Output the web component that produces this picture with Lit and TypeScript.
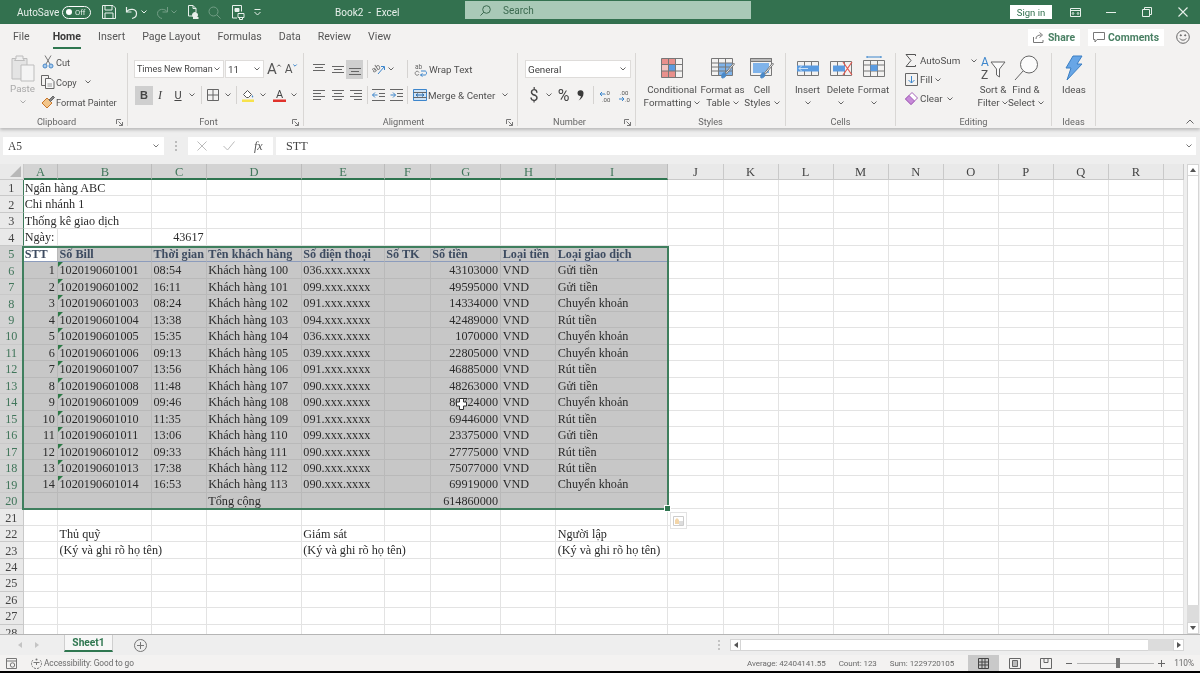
import { LitElement, html, svg, css } from "lit";
import { customElement } from "lit/decorators.js";

// spacing helpers shared by all the bars
const shared = css`
  .m1 { margin-left: 1px; } .m2 { margin-left: 2px; } .m3 { margin-left: 3px; }
  .m4 { margin-left: 4px; } .m5 { margin-left: 5px; } .m6 { margin-left: 6px; }
  .m7 { margin-left: 7px; } .m8 { margin-left: 8px; } .m9 { margin-left: 9px; }
  .m10 { margin-left: 10px; } .m11 { margin-left: 11px; } .m13 { margin-left: 13px; }
  .m14 { margin-left: 14px; } .m18 { margin-left: 18px; } .m19 { margin-left: 19px; }
  .m25 { margin-left: 25px; } .m26 { margin-left: 26px; }
  svg { display: block; flex: none; overflow: visible; }
`;

const chev = (cls = "", color = "#666") => html`<svg class=${cls} width="6" height="4" viewBox="0 0 6 4" fill="none" stroke=${color}><path d="M.5.5 3 3 5.500.5"/></svg>`;

/* title bar */
@customElement("xl-titlebar")
class XlTitlebar extends LitElement {
  static styles = [shared, css`
    :host { display: flex; align-items: center; height: 24px; background: #33714f; color: #e8f0eb; font-size: 10px; flex: none; }
    .auto { margin-left: 17px; width: 45px; white-space: nowrap; }
    .toggle { width: 29px; height: 13px; box-sizing: border-box; border: 1px solid #fff; border-radius: 7px; display: flex; align-items: center; padding-left: 3px; font-size: 7.500px; gap: 3px; }
    .toggle i { width: 6px; height: 6px; border-radius: 50%; background: #fff; }
    .dim { opacity: .35; }
    .title { margin-left: 74px; width: 130px; white-space: nowrap; }
    .search { width: 286px; height: 18px; margin-top: -4px; background: #a9c9b7; display: flex; align-items: center; color: #3c6a50; font-size: 10px; box-sizing: border-box; padding-left: 15px; gap: 12px; }
    .sign { margin-left: 259px; width: 42px; height: 14px; background: #fff; color: #33714f; font-size: 9.500px; display: flex; align-items: center; justify-content: center; }
  `];
  render() {
    return html`
      <span class="auto">AutoSave</span>
      <span class="toggle"><i></i>Off</span>
      <svg class="m11" width="14" height="14" viewBox="0 0 14 14" fill="none" stroke="currentColor"><path d="M.5.5H11l2.500 2.500v10.500H.5z"/><path d="M3 .5V5h7V.5M3 13.500V8h8v5.500"/></svg>
      <svg class="m9" width="13" height="13" viewBox="0 0 13 13" fill="none" stroke="currentColor" stroke-width="1.200"><path d="M1.500 1v5h5"/><path d="M1.500 6C4 2 11.500 2.500 11.500 7.500c0 2.500-2 4.500-4.500 5"/></svg>
      <svg class="m3" width="6" height="4" viewBox="0 0 6 4" fill="none" stroke="currentColor"><path d="M.5.5 3 3 5.500.5"/></svg>
      <svg class="m9 dim" width="13" height="13" viewBox="0 0 13 13" fill="none" stroke="currentColor"><path d="M11.500 1v5h-5"/><path d="M11.500 6C9 2 1.500 2.500 1.500 7.500c0 2.500 2 4.500 4.500 5"/></svg>
      <svg class="m2 dim" width="6" height="4" viewBox="0 0 6 4" fill="none" stroke="currentColor"><path d="M.5.5 3 3 5.500.5"/></svg>
      <svg class="m9" width="14" height="15" viewBox="0 0 14 15" fill="none" stroke="currentColor"><path d="M9 11H2.500V.5H7L10 3.500V7M7 .5v3h3"/><circle cx="9" cy="10" r="2.500" fill="currentColor"/><path d="M7 13h5.500" stroke-width="2"/></svg>
      <svg class="m8 dim" width="13" height="13" viewBox="0 0 13 13" fill="none" stroke="currentColor"><circle cx="5.500" cy="5.500" r="4.500"/><path d="m9 9 3.500 3.500"/></svg>
      <svg class="m10" width="14" height="15" viewBox="0 0 14 15" fill="none" stroke="currentColor"><path d="M1.500.5h9v6M1.500.5V13H6"/><path d="M4 3.500h4v3H4z" fill="currentColor"/><path d="M7 8.500h6v4H7z"/><path d="M8.500 13v1.500h3V13"/></svg>
      <svg class="m9" width="7" height="7" viewBox="0 0 7 7" fill="none" stroke="currentColor"><path d="M.5.5h6M.5 3l3 3 3-3"/></svg>
      <span class="title">Book2&nbsp; -&nbsp; Excel</span>
      <div class="search">
        <svg width="11" height="11" viewBox="0 0 11 11" fill="none" stroke="#3c6a50"><circle cx="6.500" cy="4.500" r="3.800"/><path d="M3.800 7.200.5 10.500"/></svg>
        <span>Search</span>
      </div>
      <span class="sign">Sign in</span>
      <svg class="m18" width="11" height="9" viewBox="0 0 11 9" fill="none" stroke="currentColor"><path d="M.5.5h10v8H.5z"/><path d="M.5 2.500h10" /><path d="M3 7V4.500M8 7V4.500M2 5.500 3 4.500l1 1M7 5.500l1-1 1 1"/></svg>
      <svg class="m25" width="10" height="1" viewBox="0 0 10 1"><path d="M0 .5h10" stroke="currentColor"/></svg>
      <svg class="m26" width="10" height="10" viewBox="0 0 10 10" fill="none" stroke="currentColor"><path d="M.5 2.500h7v7h-7zM2.500 2.500v-2h7v7h-2"/></svg>
      <svg class="m26" width="10" height="10" viewBox="0 0 10 10" fill="none" stroke="currentColor" stroke-width="1.100"><path d="m.5.500 9 9M9.500.500l-9 9"/></svg>
    `;
  }
}

/* ribbon icons */
const launcher = html`<svg class="launch" width="7" height="7" viewBox="0 0 7 7" fill="none" stroke="#777"><path d="M.5 5V.5H5M2.500 2.500l4 4M6.500 3v3.500H3"/></svg>`;

const caretUp = html`<svg class="cr" width="4" height="3" viewBox="0 0 4 3" fill="none" stroke="#555"><path d="M.3 2.500 2 .8l1.700 1.700"/></svg>`;
const caretDown = html`<svg class="cr" width="4" height="3" viewBox="0 0 4 3" fill="none" stroke="#3d86cc"><path d="M.3.500 2 2.200 3.700.5"/></svg>`;

const brush = svg`<path d="M11 20c-1-3 1-6 3-5l1 1c0 3-2 4-4 4z" fill="#4a89c8" stroke="#4a89c8"/><path d="m14.500 15 8-10 1 1-8 10z" fill="#fbfbfb" stroke="#777"/>`;

const icons = {
  paste: html`<svg width="24" height="27" viewBox="0 0 24 27" fill="none" stroke="#bdbdbd"><path d="M1 3.500h15V24H1z" fill="#e4e4e4"/><path d="M5 3.500V1h7v2.500l1.500 2h-10z" fill="#efefef"/><path d="M10 10h13v16H10z" fill="#f4f4f4"/></svg>`,
  cut: html`<svg width="14" height="14" viewBox="0 0 14 14" fill="none"><path d="m5 9 5-8.500M9 9 4 .5" stroke="#777"/><circle cx="4" cy="11" r="2" stroke="#4a89c8" fill="#a9cbec"/><circle cx="10" cy="11" r="2" stroke="#4a89c8" fill="#a9cbec"/></svg>`,
  copy: html`<svg width="14" height="14" viewBox="0 0 14 14" fill="none" stroke="#666"><path d="M.5.5h7v10h-7z"/><path d="M4.500 3.500H10l3 3v7H4.500z" fill="#f7f7f7"/><path d="M6.500 9h4.500M6.500 11h4.500" stroke="#999"/></svg>`,
  painter: html`<svg width="14" height="14" viewBox="0 0 14 14" fill="none"><path d="M1 8 6 3l5 5-5 5z" fill="#f2c58a" stroke="#c9762a"/><path d="m8 5 4-4 1.500 1.500-4 4z" fill="#888" stroke="#666"/></svg>`,
  borders: html`<svg width="12" height="12" viewBox="0 0 12 12" fill="none" stroke="#666"><path d="M.5.500h11v11H.5zM6 .5v11M.5 6h11"/></svg>`,
  fill: html`<svg width="14" height="14" viewBox="0 0 14 14" fill="none"><path d="m2.500 6.500 4-4 4 4-3 3h-2z" fill="#fff" stroke="#555"/><path d="M11.500 7c1 1.500 1 2.500 0 2.500s-1-1 0-2.500z" fill="#4a89c8"/><path d="M1 11.500h12V14H1z" fill="#f7e24c"/></svg>`,
  fontColor: html`<svg width="13" height="14" viewBox="0 0 13 14"><text x="6.500" y="9.500" font-size="11" font-family="Roboto" text-anchor="middle" fill="#444">A</text><path d="M0 11.500h13V14H0z" fill="#e0322b"/></svg>`,
  alignTop: html`<svg width="12" height="12" viewBox="0 0 12 12" stroke="#666"><path d="M0 1.500h12M2 4.500h8M0 7.500h12"/></svg>`,
  alignMid: html`<svg width="12" height="12" viewBox="0 0 12 12" stroke="#666"><path d="M0 3.500h12M2 6.500h8M0 9.500h12"/></svg>`,
  alignBot: html`<svg width="12" height="12" viewBox="0 0 12 12" stroke="#666"><path d="M0 5.500h12M2 8.500h8M0 11.500h12"/></svg>`,
  left: html`<svg width="12" height="12" viewBox="0 0 12 12" stroke="#666"><path d="M0 1.500h12M0 4.500h8M0 7.500h12M0 10.500h8"/></svg>`,
  center: html`<svg width="12" height="12" viewBox="0 0 12 12" stroke="#666"><path d="M0 1.500h12M2 4.500h8M0 7.500h12M2 10.500h8"/></svg>`,
  right: html`<svg width="12" height="12" viewBox="0 0 12 12" stroke="#666"><path d="M0 1.500h12M4 4.500h8M0 7.500h12M4 10.500h8"/></svg>`,
  orient: html`<svg width="13" height="13" viewBox="0 0 13 13" fill="none"><text x="0" y="8" font-size="8" font-family="Roboto" fill="#666" transform="rotate(-35 4 6)">ab</text><path d="M6 11 12 4M9 3.500h3.500V7" stroke="#3d86cc"/></svg>`,
  indentL: html`<svg width="13" height="12" viewBox="0 0 13 12" fill="none"><path d="M0 .5h13M0 11.500h13M7 4.500h6M7 7.500h6" stroke="#666"/><path d="M5.500 6H.5M3 3.500.5 6 3 8.500" stroke="#3d86cc"/></svg>`,
  indentR: html`<svg width="13" height="12" viewBox="0 0 13 12" fill="none"><path d="M0 .5h13M0 11.500h13M7 4.500h6M7 7.500h6" stroke="#666"/><path d="M.5 6h5M3 3.500 5.500 6 3 8.500" stroke="#3d86cc"/></svg>`,
  wrap: html`<svg width="12" height="13" viewBox="0 0 12 13" fill="none"><text x="0" y="5.500" font-size="6.500" font-family="Roboto" fill="#666">ab</text><path d="M4 9.500a2 2 0 1 0 0 1.500" stroke="#666" stroke-width=".8"/><path d="M6 8h4c2 0 2 4 0 4H5.500M7.500 10.500 5.500 12l2 1.500" stroke="#3d86cc"/></svg>`,
  merge: html`<svg width="14" height="12" viewBox="0 0 14 12" fill="none"><path d="M.5.500h13v11H.5z" fill="#cfe3f6" stroke="#3d86cc"/><path d="M.5 3.500h13M.5 8.500h13" stroke="#666"/><path d="M3 6h8M5 4.500 3 6l2 1.500M9 4.500 11 6 9 7.500" stroke="#2f6fad"/></svg>`,
  comma: html`<svg width="9" height="11" viewBox="0 0 9 11"><path d="M1.500 3a3 3 0 1 1 6 .5C7.500 6.500 5.500 9 2.500 10.500 4 9 4.800 7.500 4.800 6 3 6.300 1.500 5 1.500 3z" fill="#3a3a3a"/></svg>`,
  decUp: html`<svg width="13" height="13" viewBox="0 0 13 13" fill="none"><text x="6" y="5.500" font-size="6" font-family="Roboto" fill="#555">.0</text><text x="3" y="12.500" font-size="6" font-family="Roboto" fill="#555">.00</text><path d="M6 5H1M3 3 1 5l2 2" stroke="#3d86cc"/></svg>`,
  decDown: html`<svg width="13" height="13" viewBox="0 0 13 13" fill="none"><text x="2" y="5.500" font-size="6" font-family="Roboto" fill="#555">.00</text><text x="7" y="12.500" font-size="6" font-family="Roboto" fill="#555">.0</text><path d="M1 10h5M4 8l2 2-2 2" stroke="#3d86cc"/></svg>`,
  cond: html`<svg width="22" height="20" viewBox="0 0 22 20" fill="none"><path d="M.5.500h14v6h-14zM7.500 13h7v6.500h-7zM.5 13h7v6.500h-7z" fill="#e8908c"/><path d="M.5 6.500h14V13H.5z" fill="#f3c4c1"/><path d="M7.500 6.500h7V13h-7z" fill="#5a9be0"/><path d="M.5.5h21v19H.5zM.5 6.500h21M.5 13h21M7.500.5v19M14.500.5v19" stroke="#777"/></svg>`,
  table: html`<svg width="24" height="20" viewBox="0 0 24 20" fill="none"><path d="M7.500 5h14v12.500h-14z" fill="#7fb3ea"/><path d="M.5.5h21v17H.5zM.5 5h21M.5 9h21M.5 13h21M7.500.5v17M14.500.5v17" stroke="#777"/>${brush}</svg>`,
  styles: html`<svg width="24" height="20" viewBox="0 0 24 20" fill="none"><path d="M.5.5h21v17H.5z" stroke="#777"/><path d="M.5.5h21v3H.5z" fill="#bbb" stroke="#777"/><path d="M3 5h16v10H3z" fill="#7fb3ea"/>${brush}</svg>`,
  insert: html`<svg width="22" height="20" viewBox="0 0 22 20" fill="none"><path d="M.5 3.500h21v14H.5zM7.500 3.500v14M14.500 3.500v14" stroke="#777"/><path d="M0 7.500h22v6H0z" fill="#5a9be0"/><path d="M11 10.500H2M5 7.500l-3 3 3 3" stroke="#cfe3f6"/></svg>`,
  del: html`<svg width="22" height="20" viewBox="0 0 22 20" fill="none"><path d="M.5 3.500h21v14H.5zM7.500 3.500v14M14.500 3.500v14" stroke="#777"/><path d="M3 7.500h12v6H3z" fill="#5a9be0"/><path d="m13 4 9 13M22 4l-9 13" stroke="#e0584f" stroke-width="1.200"/></svg>`,
  format: html`<svg width="22" height="22" viewBox="0 0 22 22" fill="none"><path d="M4 1h14M4 0v2M18 0v2" stroke="#3d86cc"/><path d="M.5 4.500h21v16H.5zM7.500 4.500v16M14.500 4.500v16M.5 9h21M.5 15h21" stroke="#777"/><path d="M7.500 9h7v6h-7z" fill="#5a9be0"/></svg>`,
  sum: html`<svg width="11" height="13" viewBox="0 0 11 13" fill="none" stroke="#555"><path d="M10.500 2V.5H1L6 6.500 1 12.500h9.500V11"/></svg>`,
  fillDown: html`<svg width="13" height="13" viewBox="0 0 13 13" fill="none"><path d="M.5.500h12v12H.5z" stroke="#666"/><path d="M6.500 3v7M3.500 7l3 3 3-3" stroke="#3d86cc"/></svg>`,
  clear: html`<svg width="13" height="13" viewBox="0 0 13 13" fill="none"><path d="M.5 7 7 .5 12.500 6 6 12.500z" fill="#fff" stroke="#a45fb8"/><path d="M.5 7 4 3.500 9.500 9 6 12.500z" fill="#c78ad8" stroke="#a45fb8"/></svg>`,
  sort: html`<svg width="26" height="26" viewBox="0 0 26 26" fill="none"><text x="1" y="11" font-size="12" font-family="Roboto" fill="#3d86cc">A</text><text x="1" y="24" font-size="12" font-family="Roboto" fill="#555">Z</text><path d="M11 7h14l-5.500 7v8l-3-2v-6z" stroke="#666" fill="#fbfbfb"/></svg>`,
  find: html`<svg width="26" height="26" viewBox="0 0 26 26" fill="none" stroke="#666"><circle cx="16" cy="9.500" r="8.500" fill="#fbfbfb"/><path d="M10 16 2 25"/></svg>`,
  ideas: html`<svg width="20" height="26" viewBox="0 0 20 26"><path d="M9 1h9L13 9h5L3 25 7 13H2z" fill="#68a6e6" stroke="#3b7fc4"/></svg>`,
  share: html`<svg width="12" height="11" viewBox="0 0 12 11" fill="none" stroke="#777"><path d="M.5 5v5.500H10V8M3 7c0-3 2-4 5-4M6.500 .5l3 2.500-3 2.500"/></svg>`,
  comment: html`<svg width="12" height="11" viewBox="0 0 12 11" fill="none" stroke="#777"><path d="M.5.500h11v7H4L2 10V7.500H.5z"/></svg>`,
  smile: html`<svg width="14" height="14" viewBox="0 0 14 14" fill="none" stroke="#666"><circle cx="7" cy="7" r="6.300"/><circle cx="4.800" cy="5.300" r=".6" fill="#666"/><circle cx="9.200" cy="5.300" r=".6" fill="#666"/><path d="M3.800 8.500c1.500 2.200 5 2.200 6.400 0"/></svg>`,
};

const big = (icon: any, l1: string, l2: any, cls = "") => html`
  <div class="big ${cls}">
    <div class="bi">${icon}</div>
    <div class="bl">${l1}</div>
    <div class="bl">${l2}</div>
  </div>`;
const drop = (t: string) => html`${t}<svg class="inl" width="6" height="4" viewBox="0 0 6 4" fill="none" stroke="#666"><path d="M.5.5 3 3 5.500.5"/></svg>`;
const dropOnly = html`<svg class="inl" width="6" height="4" viewBox="0 0 6 4" fill="none" stroke="#666"><path d="M.5.5 3 3 5.500.5"/></svg>`;

@customElement("xl-ribbon")
class XlRibbon extends LitElement {
  static styles = [shared, css`
    :host { display: block; flex: none; font-size: 9.800px; color: #505050; position: relative; z-index: 2; box-shadow: 0 2px 3px rgba(0,0,0,.22); background: #f3f2f1; }
    .tabs { height: 26px; display: flex; align-items: center; gap: 17px; padding-left: 13px; font-size: 10.600px; color: #555; }
    .tabs span { position: relative; white-space: nowrap; line-height: 26px; }
    .tabs .file { margin-right: 6px; }
    .tabs .on { color: #3a3a3a; font-weight: 700; }
    .tabs .on::after { content: ""; position: absolute; left: 0; right: 0; bottom: 1px; height: 2.500px; background: #2f7750; }
    .act { margin-left: auto; display: flex; align-items: center; gap: 8px; padding-right: 10px; }
    .act button { all: unset; height: 17px; background: #fff; color: #4a8064; font: 700 10.400px Roboto, sans-serif; display: flex; align-items: center; justify-content: center; gap: 3px; }
    .act .sh { width: 52px; }
    .act .co { width: 76px; margin-right: 4px; }
    .rib { display: flex; height: 78px; box-sizing: border-box; padding: 3px 0 2px; position: relative; }
    .g { display: flex; flex-direction: column; box-sizing: border-box; border-right: 1px solid #d9d7d5; flex: none; }
    .w128 { width: 128px; } .w176 { width: 176px; } .w214 { width: 214px; } .w118 { width: 118px; }
    .w150 { width: 150px; } .w110 { width: 110px; } .w156 { width: 156px; } .w44 { width: 44px; }
    .body { flex: 1; display: flex; min-height: 0; }
    .gl { height: 12px; margin-bottom: -2px; display: flex; align-items: center; font-size: 9.200px; color: #666; line-height: 12px; }
    .gl span { flex: 1; text-align: center; }
    .launch { margin: 0 4px 0 3px; }
    .col { display: flex; flex-direction: column; }
    .paste { width: 31px; margin-left: 7px; align-items: center; padding-top: 2px; color: #a9a9a9; }
    .paste .t { line-height: 14px; }
    .paste svg:last-child { margin-top: 4px; }
    .clip { margin-left: 3px; margin-top: -1px; font-size: 9.200px; }
    .rl { height: 20px; display: flex; align-items: center; white-space: nowrap; }
    .rl svg:first-child { margin-right: 1px; }
    .r1 { height: 18px; margin-top: 7px; display: flex; align-items: center; white-space: nowrap; }
    .r2 { height: 20px; margin-top: 7px; display: flex; align-items: center; white-space: nowrap; }
    .box { height: 18px; background: #fff; border: 1px solid #dedcda; box-sizing: border-box; display: flex; align-items: center; justify-content: space-between; padding: 0 3px 0 2px; font-size: 9.800px; color: #444; }
    .fb { width: 90px; font-size: 9px; } .sb { width: 39px; margin-left: 1px; } .nb { width: 106px; padding: 0 4px 0 2px; }
    .sz1 { font-size: 15px; margin-left: 3px; color: #555; }
    .sz2 { font-size: 12px; margin-left: 4px; color: #555; }
    .cr { align-self: flex-start; margin-top: 4px; }
    .ch { width: 18px; height: 19px; display: flex; align-items: center; justify-content: center; font: 700 11px "Liberation Sans", sans-serif; color: #444; }
    .bold { background: #cfcfcf; margin-left: 1px; }
    .it { width: 14px; font: italic 12px "Liberation Serif", serif; }
    .un { width: 22px; font: 11px Roboto, sans-serif; text-decoration: underline; }
    .sep { width: 1px; height: 18px; background: #d5d3d1; flex: none; }
    .on-box { width: 17px; height: 19px; background: #cfcfcf; display: flex; align-items: center; justify-content: center; }
    .fs { padding-left: 6px; }
    .al { padding-left: 9px; }
    .nu { padding-left: 7px; }
    .dollar { width: 10px; margin-left: 4px; font-size: 16px; color: #444; text-align: center; }
    .pct { width: 15px; font-size: 16px; color: #444; text-align: center; }
    .big { display: flex; flex-direction: column; align-items: center; padding-top: 5px; flex: none; white-space: nowrap; }
    .bi { height: 20px; margin-bottom: 4.500px; display: flex; align-items: flex-end; }
    .bl { line-height: 13px; height: 13px; display: flex; align-items: center; gap: 3px; }
    .inl { margin-top: 1px; }
    .c1 { width: 56px; margin-left: 8px; } .c2 { width: 45px; } .c3 { width: 34px; }
    .d { width: 33px; }
    .e1 { width: 32px; } .e2 { width: 34px; }
    .tall { padding-top: 2px; }
    .tall .bi { height: 26px; margin-bottom: 1.500px; }
    .ml5 { margin-left: 5px; }
    .ed { width: 72px; margin-left: 9px; margin-top: -2px; }
    .ed .row { height: 19px; display: flex; align-items: center; white-space: nowrap; }
    .ed .ico { width: 15px; flex: none; }
    .ideas { width: 44px; }
    .collapse { position: absolute; right: 6px; bottom: 4px; }
  `];
  render() {
    return html`
      <div class="tabs">
        <span class="file">File</span><span class="on">Home</span><span>Insert</span><span>Page Layout</span><span>Formulas</span><span>Data</span><span>Review</span><span>View</span>
        <div class="act">
          <button class="sh">${icons.share}Share</button>
          <button class="co">${icons.comment}Comments</button>
          ${icons.smile}
        </div>
      </div>
      <div class="rib">
        <section class="g w128">
          <div class="body">
            <div class="col paste">${icons.paste}<span class="t">Paste</span>${chev("", "#aaa")}</div>
            <div class="col clip">
              <div class="rl">${icons.cut}Cut</div>
              <div class="rl">${icons.copy}Copy${chev("m8")}</div>
              <div class="rl">${icons.painter}Format Painter</div>
            </div>
          </div>
          <div class="gl"><span>Clipboard</span>${launcher}</div>
        </section>

        <section class="g w176">
          <div class="body col fs">
            <div class="r1">
              <div class="box fb">Times New Roman${chev()}</div>
              <div class="box sb">11${chev()}</div>
              <div class="sz1">A</div>${caretUp}<div class="sz2">A</div>${caretDown}
            </div>
            <div class="r2">
              <div class="ch bold">B</div>
              <div class="ch it">I</div>
              <div class="ch un">U</div>
              ${chev()}
              <div class="sep m6"></div>
              <div class="m5">${icons.borders}</div>${chev("m6")}
              <div class="sep m5"></div>
              <div class="m4">${icons.fill}</div>${chev("m5")}
              <div class="m7">${icons.fontColor}</div>${chev("m5")}
            </div>
          </div>
          <div class="gl"><span>Font</span>${launcher}</div>
        </section>

        <section class="g w214">
          <div class="body col al">
            <div class="r1">
              ${icons.alignTop}<div class="m7">${icons.alignMid}</div>
              <div class="on-box m2">${icons.alignBot}</div>
              <div class="sep m4"></div>
              <div class="m4">${icons.orient}</div>${chev("m3")}
              <div class="sep m13"></div>
              <div class="m7">${icons.wrap}</div><span class="m2">Wrap Text</span>
            </div>
            <div class="r2">
              ${icons.left}<div class="m7">${icons.center}</div><div class="m6">${icons.right}</div>
              <div class="sep m5"></div>
              <div class="m4">${icons.indentL}</div><div class="m5">${icons.indentR}</div>
              <div class="sep m4"></div>
              <div class="m5">${icons.merge}</div><span class="m1">Merge &amp; Center</span>${chev("m7")}
            </div>
          </div>
          <div class="gl"><span>Alignment</span>${launcher}</div>
        </section>

        <section class="g w118">
          <div class="body col nu">
            <div class="r1"><div class="box nb">General${chev()}</div></div>
            <div class="r2">
              <span class="dollar">$</span>${chev("m7")}
              <span class="pct m4">%</span><div class="m5">${icons.comma}</div>
              <div class="sep m8"></div>
              <div class="m5">${icons.decUp}</div><div class="m6">${icons.decDown}</div>
            </div>
          </div>
          <div class="gl"><span>Number</span>${launcher}</div>
        </section>

        <section class="g w150">
          <div class="body">
            ${big(icons.cond, "Conditional", drop("Formatting"), "c1")}
            ${big(icons.table, "Format as", drop("Table"), "c2")}
            ${big(icons.styles, "Cell", drop("Styles"), "c3")}
          </div>
          <div class="gl"><span>Styles</span></div>
        </section>

        <section class="g w110">
          <div class="body">
            ${big(icons.insert, "Insert", dropOnly, "d ml5")}
            ${big(icons.del, "Delete", dropOnly, "d")}
            ${big(icons.format, "Format", dropOnly, "d")}
          </div>
          <div class="gl"><span>Cells</span></div>
        </section>

        <section class="g w156">
          <div class="body">
            <div class="col ed">
              <div class="row"><div class="ico">${icons.sum}</div>AutoSum${chev("m11")}</div>
              <div class="row"><div class="ico">${icons.fillDown}</div>Fill${chev("m2")}</div>
              <div class="row"><div class="ico">${icons.clear}</div>Clear${chev("m4")}</div>
            </div>
            ${big(icons.sort, "Sort &", drop("Filter"), "e1 tall")}
            ${big(icons.find, "Find &", drop("Select"), "e2 tall")}
          </div>
          <div class="gl"><span>Editing</span></div>
        </section>

        <section class="g w44">
          <div class="body">${big(icons.ideas, "Ideas", "", "ideas tall")}</div>
          <div class="gl"><span>Ideas</span></div>
        </section>

        <svg class="collapse" width="8" height="5" viewBox="0 0 8 5" fill="none" stroke="#666"><path d="M.5 4.500 4 1l3.500 3.500"/></svg>
      </div>
    `;
  }
}

/* sheet data */
type Cell = { t: string; right?: boolean; span?: number; tag?: boolean };
const times = ["08:54", "16:11", "08:24", "13:38", "15:35", "09:13", "13:56", "11:48", "09:46", "11:35", "13:06", "09:33", "17:38", "16:53"];
const phones = ["036", "099", "091", "094", "036", "039", "091", "090", "090", "091", "099", "090", "090", "090"];
const amounts = [43103000, 49595000, 14334000, 42489000, 1070000, 22805000, 46885000, 48263000, 80724000, 69446000, 23375000, 27775000, 75077000, 69919000];
const kinds = ["Gửi tiền", "Gửi tiền", "Chuyển khoản", "Rút tiền", "Chuyển khoản", "Chuyển khoản", "Rút tiền", "Gửi tiền", "Chuyển khoản", "Rút tiền", "Gửi tiền", "Rút tiền", "Rút tiền", "Chuyển khoản"];

const sign = "(Ký và ghi rõ họ tên)";
const cells: Record<number, Record<number, Cell>> = {
  1: { 0: { t: "Ngân hàng ABC", span: 2 } },
  2: { 0: { t: "Chi nhánh 1", span: 2 } },
  3: { 0: { t: "Thống kê giao dịch", span: 2 } },
  4: { 0: { t: "Ngày:" }, 2: { t: "43617", right: true } },
  5: Object.fromEntries(["STT", "Số Bill", "Thời gian", "Tên khách hàng", "Số điện thoại", "Số TK", "Số tiền", "Loại tiền", "Loại giao dịch"].map((t, i) => [i, { t }])),
  20: { 3: { t: "Tổng cộng" }, 6: { t: "614860000", right: true } },
  22: { 1: { t: "Thủ quỹ" }, 4: { t: "Giám sát" }, 8: { t: "Người lập" } },
  23: { 1: { t: sign, span: 2 }, 4: { t: sign, span: 2 }, 8: { t: sign } },
};
times.forEach((time, i) => {
  cells[i + 6] = {
    0: { t: String(i + 1), right: true },
    1: { t: String(1020190601001 + i), tag: true },
    2: { t: time },
    3: { t: `Khách hàng ${100 + i}` },
    4: { t: `${phones[i]}.xxx.xxxx` },
    6: { t: String(amounts[i]), right: true },
    7: { t: "VND" },
    8: { t: kinds[i] },
  };
});
const letters = "ABCDEFGHIJKLMNOPQRS".split("");

@customElement("xl-grid")
class XlGrid extends LitElement {
  static styles = [shared, css`
    :host { display: flex; flex-direction: column; flex: 1; min-height: 0; }
    .fbar { height: 35px; flex: none; background: #eeeeee; display: flex; padding-top: 9px; box-sizing: border-box; font: 11.500px "Liberation Serif", serif; color: #444; }
    .fbar > div { height: 18px; background: #fff; display: flex; align-items: center; box-sizing: border-box; }
    .name { width: 161px; margin-left: 3px; padding: 0 5px; justify-content: space-between; }
    .dots { background: none !important; width: 24px; justify-content: center; }
    .fx { width: 85px; padding-left: 9px; gap: 16px; }
    .fx i { font: italic 12px "Liberation Serif", serif; color: #555; margin-left: 3px; }
    .ftxt { width: 920px; margin-left: 3px; padding: 0 4px 0 10px; justify-content: space-between; font-size: 12.200px; }
    .sheet { flex: 1; min-height: 0; display: flex; background: #eeeeee; border-bottom: 1px solid #b5b5b5; }
    .wrap { position: relative; width: 1184px; margin-top: 1px; overflow: hidden; background: #fff; }
    .cells { display: grid; grid-template-columns: 23.500px 34.800px 94px 54.800px 95px 83px 46px 70.400px 55px 112px repeat(9, 55.050px) 20.050px; grid-template-rows: 16px; grid-auto-rows: 16.470px; font: 12.200px/16px "Liberation Serif", serif; color: #2b2b2b; }
    .ch, .rh { display: flex; align-items: center; justify-content: center; background: #e9e9e9; color: #444; box-sizing: border-box; border-right: 1px solid #c9c9c9; border-bottom: 1px solid #c9c9c9; padding-top: 1px; }
    .ch { font-size: 12.500px; }
    .ch.s { background: #d3d3d3; color: #41765b; border-right-color: #bcbcbc; border-bottom: 2px solid #2f7550; }
    .rh.s { background: #d3d3d3; color: #41765b; }
    .rh.g { border-right-color: #3c7a5a; }
    .corner { background: #e9e9e9; border-right: 1px solid #c9c9c9; border-bottom: 1px solid #c9c9c9; display: flex; align-items: flex-end; justify-content: flex-end; box-sizing: border-box; padding: 0 2px 2px 0; }
    .c { box-sizing: border-box; border-right: 1px solid #e3e3e3; border-bottom: 1px solid #e3e3e3; padding: 1px 2.500px 0 1.200px; white-space: nowrap; position: relative; line-height: 15.500px; background: #fff; }
    .c.r { text-align: right; }
    .c.sel { background: #c7c7c7; border-color: #b9b9b9; }
    .c.head { font-weight: 700; color: #3d4b60; border-bottom-color: #8c9cbc; }
    .c.act { background: #fff; }
    .c.tag::before { content: ""; position: absolute; left: 0; top: 0; border-top: 5px solid #2c7a46; border-right: 5px solid transparent; }
    .range { position: absolute; left: 22px; top: 81.900px; width: 647px; height: 264.500px; box-sizing: border-box; border: 2px solid #3f7f5e; pointer-events: none; }
    .range::after { content: ""; position: absolute; right: -4px; bottom: -4px; width: 5px; height: 5px; background: #2f7550; border: 1px solid #fff; box-sizing: content-box; }
    .cursor { position: absolute; left: 456px; top: 234px; }
    .qa { position: absolute; left: 670px; top: 348px; width: 17px; height: 17px; box-sizing: border-box; background: #fff; border: 1px solid #e3e3e3; display: flex; align-items: center; justify-content: center; }
    .vs { width: 16px; box-sizing: border-box; padding: 1px 1px 0 3px; display: flex; flex-direction: column; }
    .btn { height: 12px; flex: none; background: #fff; border: 1px solid #d5d5d5; box-sizing: border-box; display: flex; align-items: center; justify-content: center; }
    .thumb { flex: 1; background: #fff; border-left: 1px solid #d5d5d5; border-right: 1px solid #d5d5d5; }
    .rest { height: 17px; flex: none; background: #dcdcdc; }
  `];
  render() {
    const out: unknown[] = [];
    for (let r = 1; r <= 28; r++) {
      const inRange = r >= 5 && r <= 20;
      out.push(html`<div class="rh ${inRange ? "s" : ""} ${r <= 20 ? "g" : ""}">${r}</div>`);
      const row = cells[r] || {};
      for (let c = 0; c < 19; ) {
        const cell = row[c];
        const span = cell?.span || 1;
        const cls = [
          "c",
          cell?.right ? "r" : "",
          cell?.tag ? "tag" : "",
          inRange && c <= 8 ? "sel" : "",
          r === 5 && c <= 8 ? "head" : "",
          r === 5 && c === 0 ? "act" : "",
        ].join(" ");
        out.push(html`<div class=${cls} style=${span > 1 ? `grid-column: span ${span}` : ""}>${cell?.t ?? ""}</div>`);
        c += span;
      }
    }
    return html`
      <div class="fbar">
        <div class="name">A5${chev("", "#777")}</div>
        <div class="dots"><svg width="2" height="10" viewBox="0 0 2 10" fill="#aaa"><circle cx="1" cy="1" r="1"/><circle cx="1" cy="5" r="1"/><circle cx="1" cy="9" r="1"/></svg></div>
        <div class="fx">
          <svg width="10" height="10" viewBox="0 0 10 10" fill="none" stroke="#bbb"><path d="m.5.5 9 9M9.500.5l-9 9"/></svg>
          <svg width="12" height="10" viewBox="0 0 12 10" fill="none" stroke="#bbb"><path d="m.5 5 4 4 7-8.500"/></svg>
          <i>fx</i>
        </div>
        <div class="ftxt"><span>STT</span>${chev("", "#777")}</div>
      </div>
      <div class="sheet">
        <div class="wrap">
          <div class="cells">
            <div class="corner"><svg width="11" height="11" viewBox="0 0 11 11"><path d="M11 0v11H0z" fill="#b8b8b8"/></svg></div>
            ${letters.map((l, i) => html`<div class="ch ${i < 9 ? "s" : ""}">${i < 18 ? l : ""}</div>`)}
            ${out}
          </div>
          <div class="range"></div>
          <svg class="cursor" width="11" height="12" viewBox="0 0 11 12"><path d="M3.500.5h4v3.500H10.500v4H7.500v3.500h-4V8H.5V4h3z" fill="#fff" stroke="#333"/></svg>
          <div class="qa"><svg width="11" height="11" viewBox="0 0 11 11" fill="none"><path d="M.5 1.500h10v9H.5z" stroke="#ccc"/><path d="M2 9V5l2-2 2 2v4z" fill="#f3d5a8"/><path d="M6 7h4M6 9h4" stroke="#bbb"/></svg></div>
        </div>
        <div class="vs">
          <div class="btn"><svg width="6" height="4" viewBox="0 0 6 4" fill="#555"><path d="M3 0l3 4H0z"/></svg></div>
          <div class="thumb"></div>
          <div class="rest"></div>
          <div class="btn"><svg width="6" height="4" viewBox="0 0 6 4" fill="#555"><path d="M0 0h6L3 4z"/></svg></div>
        </div>
      </div>
    `;
  }
}

@customElement("xl-footer")
class XlFooter extends LitElement {
  static styles = [shared, css`
    :host { display: block; flex: none; }
    .tabs { height: 20px; background: #eeeeee; display: flex; align-items: center; box-sizing: border-box; }
    .tab { width: 49px; height: 17px; margin-top: -3px; margin-left: 25px; background: #f7f7f7; color: #2f7750; font: 700 10.200px Roboto, sans-serif; display: flex; align-items: center; justify-content: center; box-sizing: border-box; border: 1px solid #cfcfcf; border-top: none; border-bottom: 2px solid #2f7750; }
    .plus { margin-left: 21px; }
    .grip { margin-left: 571px; }
    .hs { margin-left: 10px; width: 454px; height: 12px; display: flex; }
    .hb { width: 11px; flex: none; background: #fff; border: 1px solid #d5d5d5; box-sizing: border-box; display: flex; align-items: center; justify-content: center; }
    .ht { width: 407px; flex: none; background: #fff; border-top: 1px solid #d5d5d5; border-bottom: 1px solid #d5d5d5; box-sizing: border-box; }
    .hr { width: 25px; flex: none; background: #dcdcdc; }
    .status { height: 16px; background: #f3f2f1; display: flex; align-items: center; font-size: 8.300px; letter-spacing: -.05px; color: #6a6a6a; white-space: nowrap; }
    .stats { margin-left: auto; display: flex; gap: 13px; margin-right: 14px; font-size: 8px; }
    .view { width: 31px; height: 16px; background: #c9c9c9; display: flex; align-items: center; justify-content: center; }
    .slider { margin-left: 5px; width: 77px; height: 10px; display: flex; justify-content: center; background: linear-gradient(#b5b5b5, #b5b5b5) center / 100% 1px no-repeat; }
    .slider i { width: 4px; height: 10px; background: #777; margin-left: 5px; }
    .pct { margin-left: 9px; margin-right: 6px; }
    .black { height: 2px; background: #000; }
  `];
  render() {
    return html`
      <div class="tabs">
        <svg class="m18" width="4" height="6" viewBox="0 0 4 6" fill="#c4c4c4"><path d="M4 0v6L0 3z"/></svg>
        <svg class="m13" width="4" height="6" viewBox="0 0 4 6" fill="#c4c4c4"><path d="M0 0v6l4-3z"/></svg>
        <div class="tab">Sheet1</div>
        <svg class="plus" width="13" height="13" viewBox="0 0 13 13" fill="none" stroke="#777"><circle cx="6.500" cy="6.500" r="6"/><path d="M6.500 3v7M3 6.500h7"/></svg>
        <svg class="grip" width="2" height="10" viewBox="0 0 2 10" fill="#b5b5b5"><circle cx="1" cy="1" r="1"/><circle cx="1" cy="5" r="1"/><circle cx="1" cy="9" r="1"/></svg>
        <div class="hs">
          <div class="hb"><svg width="4" height="6" viewBox="0 0 4 6" fill="#555"><path d="M4 0v6L0 3z"/></svg></div>
          <div class="ht"></div>
          <div class="hr"></div>
          <div class="hb"><svg width="4" height="6" viewBox="0 0 4 6" fill="#555"><path d="M0 0v6l4-3z"/></svg></div>
        </div>
      </div>
      <div class="status">
        <svg class="m6" width="11" height="11" viewBox="0 0 11 11" fill="none" stroke="#777"><path d="M.5.500h10v10H.5zM.5 3h10"/><circle cx="6.500" cy="7" r="2.200"/></svg>
        <svg class="m13" width="13" height="11" viewBox="0 0 13 11" fill="none" stroke="#777"><path d="M3 2A5 5 0 1 0 10 2" stroke-dasharray="2 1"/><circle cx="6.500" cy="1.500" r="1" fill="#777" stroke="none"/><path d="M3.500 4.500h6M6.500 4.500V7"/></svg>
        <span class="m1">Accessibility: Good to go</span>
        <div class="stats"><span>Average: 42404141.55</span><span>Count: 123</span><span>Sum: 1229720105</span></div>
        <div class="view"><svg width="11" height="11" viewBox="0 0 11 11" fill="none" stroke="#444"><path d="M.5.500h10v10H.5zM4 .5v10M7 .5v10M.5 4h10M.5 7h10"/></svg></div>
        <svg class="m10" width="12" height="11" viewBox="0 0 12 11" fill="none" stroke="#666"><path d="M.5.500h11v10H.5z"/><path d="M3.500 2.500h5v6h-5z" fill="#bbb"/></svg>
        <svg class="m19" width="12" height="11" viewBox="0 0 12 11" fill="none" stroke="#666"><path d="M.5.500h11v10H.5zM4 .5v4h4v-4"/></svg>
        <svg class="m14" width="6" height="1" viewBox="0 0 6 1"><path d="M0 .5h6" stroke="#666"/></svg>
        <div class="slider"><i></i></div>
        <svg class="m4" width="7" height="7" viewBox="0 0 7 7" stroke="#666"><path d="M0 3.500h7M3.500 0v7"/></svg>
        <span class="pct">110%</span>
      </div>
      <div class="black"></div>
    `;
  }
}

@customElement("app-root")
export class AppRoot extends LitElement {
  static styles = css`
    :host { display: flex; flex-direction: column; width: 1200px; height: 673px; overflow: hidden; font-family: Roboto, "Noto Sans", sans-serif; background: #f3f2f1; filter: blur(.3px); }
  `;
  render() {
    return html`
      <xl-titlebar></xl-titlebar>
      <xl-ribbon></xl-ribbon>
      <xl-grid></xl-grid>
      <xl-footer></xl-footer>
    `;
  }
}
